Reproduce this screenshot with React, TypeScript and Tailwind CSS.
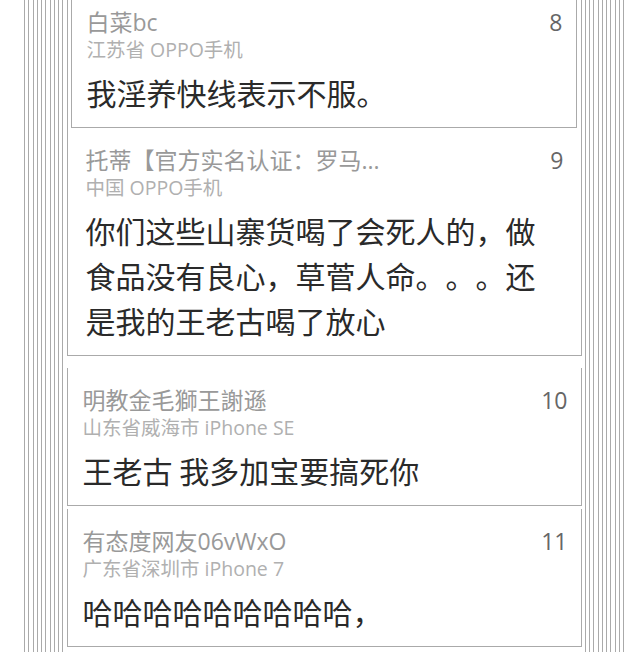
import type { ReactNode } from "react";

const font = { fontFamily: '"Open Sans", "Noto Sans CJK SC", sans-serif' };
const cjk = { fontFamily: '"Noto Sans CJK SC", sans-serif' };

type Floor = {
  num: number;
  name: string;
  loc: string;
  lines: string[];
};

const floors: Record<number, Floor> = {
  8: { num: 8, name: "白菜bc", loc: "江苏省 OPPO手机", lines: ["我淫养快线表示不服。"] },
  9: {
    num: 9,
    name: "托蒂【官方实名认证：罗马...",
    loc: "中国 OPPO手机",
    lines: ["你们这些山寨货喝了会死人的，做", "食品没有良心，草菅人命。。。还", "是我的王老古喝了放心"],
  },
  10: { num: 10, name: "明教金毛獅王謝遜", loc: "山东省威海市 iPhone SE", lines: ["王老古 我多加宝要搞死你"] },
  11: { num: 11, name: "有态度网友06vWxO", loc: "广东省深圳市 iPhone 7", lines: ["哈哈哈哈哈哈哈哈哈，"] },
};

// the stacked floor outlines running down both sides
const Rail = ({ depth, children }: { depth: number; children: ReactNode }) => {
  if (depth === 0) return <>{children}</>;
  return (
    <div className="h-full border-x border-[#aaa] px-[3.25px]">
      <Rail depth={depth - 1}>{children}</Rail>
    </div>
  );
};

const Body = ({ floor, top = "pt-[17px]" }: { floor: Floor; top?: string }) => (
  <div className={`flex justify-between pl-[15px] pr-[13px] pb-[12px] ${top}`}>
    <div className="min-w-0 flex-1">
      <div className="text-[23px] leading-[31px] text-[#999] whitespace-nowrap">{floor.name}</div>
      <div className="text-[19.5px] leading-[23px] text-[#b0b0b0] whitespace-nowrap">{floor.loc}</div>
      <div
        className="mt-[9px] text-[30px] leading-[45px] text-[#2a2a2a] [text-spacing-trim:space-all]"
        style={cjk}
      >
        {floor.lines.map((l) => (
          <div key={l} className="whitespace-nowrap">{l}</div>
        ))}
      </div>
    </div>
    <div className="text-[23px] leading-[31px] text-[#666]">{floor.num}</div>
  </div>
);

export default function App() {
  return (
    <div className="h-[652px] w-[642px] overflow-hidden bg-white pl-[24px] pr-[18px]" style={font}>
      <Rail depth={10}>
        <div className="flex flex-col">
          {/* floor 9 quoting floor 8 */}
          <div className="border-x border-b border-[#aaa] pl-[3px] pr-[4px]">
            <div className="border-x border-b border-[#aaa]">
              <Body floor={floors[8]} top="pt-[7px]" />
            </div>
            <Body floor={floors[9]} />
          </div>

          <div className="mt-[12px] border-x border-b border-[#aaa]">
            <Body floor={floors[10]} />
          </div>

          <div className="mt-[3px] border-x border-b border-[#aaa]">
            <Body floor={floors[11]} />
          </div>
        </div>
      </Rail>
    </div>
  );
}
